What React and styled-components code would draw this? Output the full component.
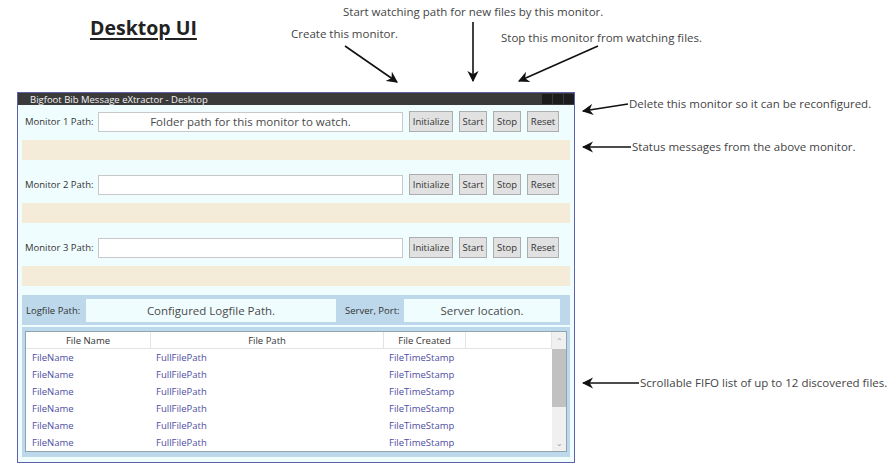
import React from 'react';
import styled, {createGlobalStyle} from 'styled-components';

const GlobalStyle = createGlobalStyle`
  body {
    margin: 0;
    background: #ffffff;
    font-family: "Open Sans", "Liberation Sans", sans-serif;
  }
`

const Page = styled.div`
  position: relative;
  width: 896px;
  height: 475px;
  overflow: hidden;
  background: #fff;
`

const Header = styled.div`
  height: 92px;
  box-sizing: border-box;
  padding: 14px 0 0 90px;
`

const Title = styled.h1`
  margin: 0;
  font-size: 19.5px;
  font-weight: 700;
  color: #222;
  text-decoration: underline;
  text-underline-offset: 3px;
  text-decoration-thickness: 1.5px;
`

const Window = styled.div`
  margin-left: 17px;
  width: 558px;
  box-sizing: border-box;
  border: 1px solid #5d61aa;
  font-family: "Open Sans", "Liberation Sans", sans-serif;
`

const TitleBar = styled.div`
  height: 12px;
  background: #3a3a3a;
  display: flex;
  align-items: center;
  justify-content: space-between;
  padding-left: 12px;
  font-size: 9.5px;
  color: #f4f4f4;
`

const WinControls = styled.div`
  display: flex;
  gap: 1px;
  height: 100%;
  align-items: center;
`

const WinBox = styled.span`
  width: 10px;
  height: 10px;
  background: #1c1c1c;
`

const Body = styled.div`
  background: #f0fdfe;
  padding: 6px 4px 5px 4px;
  display: flex;
  flex-direction: column;
`

const Monitor = styled.div`
  display: flex;
  flex-direction: column;
  gap: 8px;
  margin-bottom: ${p => (p.last ? '9px' : '14px')};
`

const Row = styled.div`
  display: flex;
  align-items: center;
  height: 21px;
`

const Label = styled.span`
  width: ${p => p.w || 73}px;
  padding-left: ${p => p.pl || 3}px;
  font-size: 9.5px;
  color: #333;
  white-space: nowrap;
`

const PathInput = styled.div`
  width: 305px;
  height: 20px;
  box-sizing: border-box;
  background: #fff;
  border: 1px solid #c8c8c8;
  display: flex;
  align-items: center;
  justify-content: center;
  font-size: 11.5px;
  color: #4a4a4a;
  margin-right: 6px;
`

const Buttons = styled.div`
  display: flex;
  gap: 6px;
`

const Btn = styled.div`
  width: ${p => p.w}px;
  height: 21px;
  box-sizing: border-box;
  background: #e1e1e1;
  border: 1px solid #adadad;
  display: flex;
  align-items: center;
  justify-content: center;
  font-size: 9.5px;
  color: #333;
`

const Status = styled.div`
  height: 20px;
  background: #f4ecd8;
`

const LogBar = styled.div`
  height: 30px;
  background: #bcd8ea;
  display: flex;
  align-items: center;
`

const LogInput = styled.div`
  width: ${p => p.w}px;
  height: 23px;
  background: #f0fdfe;
  display: flex;
  align-items: center;
  justify-content: center;
  font-size: 11.5px;
  color: #4a4a4a;
  margin-right: 6px;
`

const ListPanel = styled.div`
  margin-top: 2px;
  background: #bcd8ea;
  padding: 4px 3px 5px 3px;
`

const List = styled.div`
  background: #fff;
  border: 1px solid #8fa3b0;
  display: flex;
`

const Table = styled.div`
  flex: 1;
`

const Cols = styled.div`
  display: grid;
  grid-template-columns: 125px 233px 82px 86px;
  height: 17px;
  align-items: center;
  font-size: 9.5px;
`

const HeadCell = styled.div`
  height: 100%;
  display: flex;
  align-items: center;
  justify-content: center;
  color: #333;
  border-right: 1px solid #e3e3e3;
  border-bottom: 1px solid #e3e3e3;
  box-sizing: border-box;
`

const Cell = styled.div`
  color: #4e4ea2;
  padding-left: ${p => p.pl || 6}px;
`

const Scroll = styled.div`
  width: 15px;
  background: #f0f0f0;
  display: flex;
  flex-direction: column;
`

const ScrollArrow = styled.div`
  height: 17px;
  display: flex;
  align-items: center;
  justify-content: center;
  color: #a0a0a0;
  font-size: 8px;
`

const Thumb = styled.div`
  height: 58px;
  background: #c1c1c1;
`

const Spacer = styled.div`
  flex: 1;
`

const Note = styled.div`
  position: absolute;
  left: ${p => p.x}px;
  top: ${p => p.y}px;
  font-size: 11.5px;
  color: #444;
  white-space: nowrap;
  line-height: 16px;
`

const Arrows = styled.svg`
  position: absolute;
  left: 0;
  top: 0;
  pointer-events: none;
`

const rows = [0, 1, 2, 3, 4, 5]

// callout arrows: x1, y1 -> x2, y2 (tip)
const arrows = [
  [345, 46, 397, 82],
  [473, 22, 473, 81],
  [598, 46, 519, 81],
  [628, 104, 583, 111],
  [631, 147, 583, 147],
  [639, 383, 583, 383],
]

const MonitorRow = ({n, placeholder, last}) => (
  <Monitor last={last}>
    <Row>
      <Label>Monitor {n} Path:</Label>
      <PathInput>{placeholder}</PathInput>
      <Buttons>
        <Btn w={44}>Initialize</Btn>
        <Btn w={28}>Start</Btn>
        <Btn w={28}>Stop</Btn>
        <Btn w={32}>Reset</Btn>
      </Buttons>
    </Row>
    <Status />
  </Monitor>
)

const App = () => {
  return (
    <Page>
      <GlobalStyle />
      <Header>
        <Title>Desktop UI</Title>
      </Header>

      <Window>
        <TitleBar>
          <span>Bigfoot Bib Message eXtractor - Desktop</span>
          <WinControls>
            <WinBox />
            <WinBox />
            <WinBox />
          </WinControls>
        </TitleBar>
        <Body>
          <MonitorRow n={1} placeholder="Folder path for this monitor to watch." />
          <MonitorRow n={2} />
          <MonitorRow n={3} last />

          <LogBar>
            <Label w={60} pl={4}>Logfile Path:</Label>
            <LogInput w={250}>Configured Logfile Path.</LogInput>
            <Label w={59} pl={0}>Server, Port:</Label>
            <LogInput w={156}>Server location.</LogInput>
          </LogBar>

          <ListPanel>
            <List>
              <Table>
                <Cols>
                  <HeadCell>File Name</HeadCell>
                  <HeadCell>File Path</HeadCell>
                  <HeadCell>File Created</HeadCell>
                  <HeadCell />
                </Cols>
                {rows.map(i => (
                  <Cols key={i}>
                    <Cell>FileName</Cell>
                    <Cell pl={5}>FullFilePath</Cell>
                    <Cell pl={5}>FileTimeStamp</Cell>
                    <Cell />
                  </Cols>
                ))}
              </Table>
              <Scroll>
                <ScrollArrow>&#8963;</ScrollArrow>
                <Thumb />
                <Spacer />
                <ScrollArrow>&#8964;</ScrollArrow>
              </Scroll>
            </List>
          </ListPanel>
        </Body>
      </Window>

      <Note x={291} y={26}>Create this monitor.</Note>
      <Note x={343} y={4}>Start watching path for new files by this monitor.</Note>
      <Note x={501} y={30}>Stop this monitor from watching files.</Note>
      <Note x={629} y={96}>Delete this monitor so it can be reconfigured.</Note>
      <Note x={632} y={139}>Status messages from the above monitor.</Note>
      <Note x={640} y={375}>Scrollable FIFO list of up to 12 discovered files.</Note>

      <Arrows width="896" height="475">
        <defs>
          <marker id="head" viewBox="0 0 10 10" refX="9" refY="5" markerWidth="7" markerHeight="7" orient="auto">
            <path d="M0,0 L10,5 L0,10 L3,5 z" fill="#111" />
          </marker>
        </defs>
        {arrows.map(([x1, y1, x2, y2], i) => (
          <line key={i} x1={x1} y1={y1} x2={x2} y2={y2} stroke="#111" strokeWidth="1.6" markerEnd="url(#head)" />
        ))}
      </Arrows>
    </Page>
  )
}

export default App;
